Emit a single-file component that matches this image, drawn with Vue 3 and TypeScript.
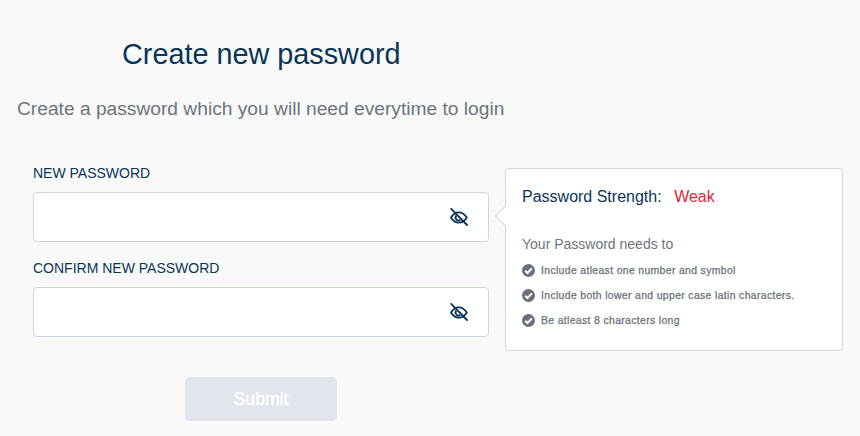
<script setup lang="ts">
const fields: string[] = ['NEW PASSWORD', 'CONFIRM NEW PASSWORD']
const rules: string[] = [
  'Include atleast one number and symbol',
  'Include both lower and upper case latin characters.',
  'Be atleast 8 characters long',
]
</script>

<template>
  <div class="page">
    <h1 class="title">Create new password</h1>
    <p class="subtitle">Create a password which you will need everytime to login</p>
    <div class="content">
      <div class="form">
        <div v-for="f in fields" :key="f" class="field">
          <label class="label">{{ f }}</label>
          <div class="input">
            <svg class="eye" width="18" height="18" viewBox="0 0 18 18" fill="none" stroke="#0b3558" stroke-width="1.8">
              <path d="M1 9.500C3 6 5.600 4.300 8.800 4.300s5.900 1.700 8 5.200c-2.100 3.500-4.800 5.200-8 5.200s-5.800-1.700-7.800-5.200z" />
              <path d="M6.300 7.600a3 3 0 0 0 4 4.400" />
              <path d="M1.200 0.800L17 17" stroke-linecap="round" />
            </svg>
          </div>
        </div>
        <button class="submit" type="button">Submit</button>
      </div>
      <aside class="pop">
        <span class="arrow"></span>
        <div class="strength"><span>Password Strength:</span><span class="weak">Weak</span></div>
        <div class="needs">Your Password needs to</div>
        <ul class="rules">
          <li v-for="r in rules" :key="r" class="rule">
            <svg width="13" height="13" viewBox="0 0 13 13">
              <circle cx="6.500" cy="6.500" r="6.500" fill="#67717e" />
              <path d="M3.200 6.700L5.500 9L9.900 4.400" fill="none" stroke="#fff" stroke-width="2" />
            </svg>
            <span>{{ r }}</span>
          </li>
        </ul>
      </aside>
    </div>
  </div>
</template>

<style>
html, body { margin: 0; background: #f9f9f9; }
</style>

<style scoped>
.page {
  width: 860px;
  height: 436px;
  overflow: hidden;
  background: #f9f9f9;
  font-family: "Liberation Sans", Arial, sans-serif;
  box-sizing: border-box;
  padding-top: 37px;
}
.title {
  margin: 0 0 0 122px;
  font-size: 28.8px;
  line-height: 34px;
  font-weight: 400;
  color: #0b3558;
}
.subtitle {
  margin: 27px 0 0 17px;
  font-size: 19.2px;
  line-height: 22px;
  color: #6c757d;
}
.content {
  display: flex;
  align-items: flex-start;
  margin-top: 45px;
  padding-left: 33px;
}
.form { width: 456px; display: flex; flex-direction: column; }
.field { margin-bottom: 18px; }
.label {
  display: block;
  font-size: 14px;
  line-height: 16px;
  color: #0b3558;
  margin-bottom: 11px;
}
.input {
  height: 48px;
  background: #fff;
  border: 1px solid #d0d7e2;
  border-radius: 4px;
  display: flex;
  align-items: center;
  justify-content: flex-end;
  padding-right: 20px;
}
.submit {
  align-self: flex-start;
  margin: 22px 0 0 152px;
  width: 152px;
  height: 44px;
  border: 0;
  border-radius: 5px;
  background: #e1e6ed;
  color: #fff;
  font: 400 17.6px "Liberation Sans", Arial, sans-serif;
  -webkit-text-stroke: 0.4px #fff;
}
.pop {
  position: relative;
  margin: 3px 0 0 16px;
  width: 338px;
  height: 183px;
  box-sizing: border-box;
  background: #fff;
  border: 1px solid #d0d7e2;
  border-radius: 4px;
  padding: 19px 16px;
}
.arrow {
  position: absolute;
  left: -8px;
  top: 39px;
  width: 15px;
  height: 15px;
  background: #fff;
  border-left: 1px solid #d0d7e2;
  border-bottom: 1px solid #d0d7e2;
  transform: rotate(45deg);
}
.strength {
  display: flex;
  gap: 12.5px;
  font-size: 16px;
  line-height: 18px;
  color: #0b3558;
}
.weak { color: #dc1f3c; }
.needs {
  margin-top: 30px;
  font-size: 14px;
  line-height: 16px;
  color: #6c757d;
}
.rules {
  list-style: none;
  margin: 6px 0 0;
  padding: 0;
}
.rule {
  display: flex;
  align-items: center;
  gap: 6px;
  height: 25px;
  font-size: 10.4px;
  letter-spacing: 0.36px;
  font-weight: 400;
  color: #67717b;
  -webkit-text-stroke: 0.25px #67717b;
}
</style>
